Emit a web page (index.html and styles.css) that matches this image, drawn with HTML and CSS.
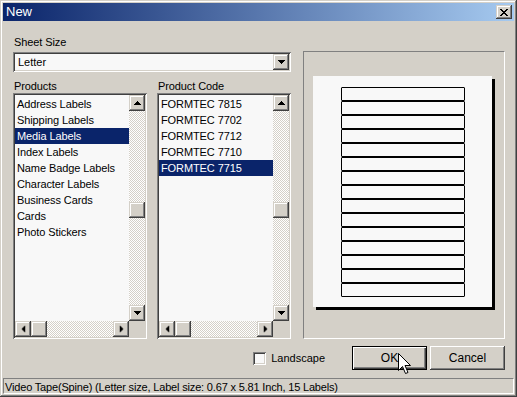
FILE: index.html
```html
<!DOCTYPE html>
<html>
<head>
<meta charset="utf-8">
<link rel="stylesheet" href="styles.css">
</head>
<body>
<div class="window">
  <div class="titlebar">
    <span class="title">New</span>
    <span class="close-btn raised"><svg width="8" height="7" viewBox="0 0 8 7"><path d="M0 0h2v1h1v1h2V1h1V0h2v1H7v1H6v1H5v1h1v1h1v1h1v1H6V6H5V5H3v1H2v1H0V6h1V5h1V4h1V3H2V2H1V1H0z" fill="#000"/></svg></span>
  </div>
  <div class="content">
    <div class="left">
      <div class="label">Sheet Size</div>
      <div class="combo sunken">
        <div class="combo-text">Letter</div>
        <div class="sbtn raised"><svg class="arr down" width="7" height="4" viewBox="0 0 7 4"><path d="M3 0h1v1h1v1h1v1h1v1H0V3h1V2h1V1h1z"/></svg></div>
      </div>
      <div class="lists">
        <div class="col">
          <div class="label label2">Products</div>
          <div class="listbox sunken">
            <div class="items">
              <div class="item">Address Labels</div>
              <div class="item">Shipping Labels</div>
              <div class="item sel">Media Labels</div>
              <div class="item">Index Labels</div>
              <div class="item">Name Badge Labels</div>
              <div class="item">Character Labels</div>
              <div class="item">Business Cards</div>
              <div class="item">Cards</div>
              <div class="item">Photo Stickers</div>
            </div>
            <div class="vscroll track">
              <div class="sbtn raised"><svg class="arr" width="7" height="4" viewBox="0 0 7 4"><path d="M3 0h1v1h1v1h1v1h1v1H0V3h1V2h1V1h1z"/></svg></div>
              <div class="vtrack"><div class="thumb raised vthumb"></div></div>
              <div class="sbtn raised"><svg class="arr down" width="7" height="4" viewBox="0 0 7 4"><path d="M3 0h1v1h1v1h1v1h1v1H0V3h1V2h1V1h1z"/></svg></div>
            </div>
            <div class="hscroll track">
              <div class="sbtn raised"><svg class="arr left" width="7" height="4" viewBox="0 0 7 4"><path d="M3 0h1v1h1v1h1v1h1v1H0V3h1V2h1V1h1z"/></svg></div>
              <div class="thumb raised hthumb"></div>
              <div class="htrack"></div>
              <div class="sbtn raised"><svg class="arr right" width="7" height="4" viewBox="0 0 7 4"><path d="M3 0h1v1h1v1h1v1h1v1H0V3h1V2h1V1h1z"/></svg></div>
            </div>
            <div class="corner"></div>
          </div>
        </div>
        <div class="col">
          <div class="label label2">Product Code</div>
          <div class="listbox sunken">
            <div class="items">
              <div class="item">FORMTEC 7815</div>
              <div class="item">FORMTEC 7702</div>
              <div class="item">FORMTEC 7712</div>
              <div class="item">FORMTEC 7710</div>
              <div class="item sel">FORMTEC 7715</div>
            </div>
            <div class="vscroll track">
              <div class="sbtn raised"><svg class="arr" width="7" height="4" viewBox="0 0 7 4"><path d="M3 0h1v1h1v1h1v1h1v1H0V3h1V2h1V1h1z"/></svg></div>
              <div class="vtrack"><div class="thumb raised vthumb"></div></div>
              <div class="sbtn raised"><svg class="arr down" width="7" height="4" viewBox="0 0 7 4"><path d="M3 0h1v1h1v1h1v1h1v1H0V3h1V2h1V1h1z"/></svg></div>
            </div>
            <div class="hscroll track">
              <div class="sbtn raised"><svg class="arr left" width="7" height="4" viewBox="0 0 7 4"><path d="M3 0h1v1h1v1h1v1h1v1H0V3h1V2h1V1h1z"/></svg></div>
              <div class="thumb raised hthumb"></div>
              <div class="htrack"></div>
              <div class="sbtn raised"><svg class="arr right" width="7" height="4" viewBox="0 0 7 4"><path d="M3 0h1v1h1v1h1v1h1v1H0V3h1V2h1V1h1z"/></svg></div>
            </div>
            <div class="corner"></div>
          </div>
        </div>
      </div>
    </div>
    <div class="preview">
      <div class="paper">
        <div class="lbl"></div><div class="lbl"></div><div class="lbl"></div><div class="lbl"></div><div class="lbl"></div>
        <div class="lbl"></div><div class="lbl"></div><div class="lbl"></div><div class="lbl"></div><div class="lbl"></div>
        <div class="lbl"></div><div class="lbl"></div><div class="lbl"></div><div class="lbl"></div><div class="lbl"></div>
      </div>
    </div>
  </div>
  <div class="actions">
    <label class="check"><span class="box sunken"></span><span>Landscape</span></label>
    <div class="buttons">
      <div class="button default">OK</div>
      <div class="button">Cancel</div>
    </div>
  </div>
  <div class="status">Video Tape(Spine) (Letter size, Label size: 0.67 x 5.81 Inch, 15 Labels)</div>
  <svg class="cursor" width="13" height="21" viewBox="0 0 13 21"><path d="M0.5 0.5V17.5L4.5 13.5L7.5 20.5L10 19.5L7 12.5H12.5Z" fill="#fff" stroke="#000" stroke-width="1"/></svg>
</div>
</body>
</html>
```

FILE: styles.css
```css
html, body {
  margin: 0;
  padding: 0;
  background: #d4d0c8;
}

.window {
  position: relative;
  width: 517px;
  height: 397px;
  box-sizing: border-box;
  padding: 3px;
  background: #d4d0c8;
  box-shadow: inset -1px -1px #404040, inset 1px 1px #d4d0c8, inset -2px -2px #808080, inset 2px 2px #fff;
  display: flex;
  flex-direction: column;
  font-family: "Liberation Sans", Arial, sans-serif;
  font-size: 11px;
  color: #000;
}

.raised {
  background: #d4d0c8;
  box-shadow: inset -1px -1px #404040, inset 1px 1px #d4d0c8, inset -2px -2px #808080, inset 2px 2px #fff;
}

.sunken {
  box-shadow: inset 1px 1px #808080, inset -1px -1px #fff, inset 2px 2px #404040, inset -2px -2px #d4d0c8;
}

.titlebar {
  height: 18px;
  flex: none;
  background: linear-gradient(90deg, #0a246a, #a6caf0);
  display: flex;
  align-items: center;
  justify-content: space-between;
  padding: 0 2px 0 3px;
  color: #fff;
}

.title {
  font-size: 13px;
  line-height: 18px;
}

.close-btn {
  width: 16px;
  height: 14px;
  display: flex;
  align-items: center;
  justify-content: center;
}

.close-btn svg { display: block; margin-left: -1px; }

.content {
  display: grid;
  grid-template-columns: 278px 202px;
  column-gap: 12px;
  padding-left: 10px;
  margin-top: 14px;
}

.label {
  height: 14px;
  line-height: 14px;
  padding-left: 1px;
  letter-spacing: -0.1px;
}

.label2 { margin-top: 7px; }

.combo {
  margin-top: 3px;
  height: 20px;
  box-sizing: border-box;
  padding: 2px;
  background: #f8f8f8;
  display: flex;
}

.combo-text {
  flex: 1;
  padding-left: 3px;
  line-height: 16px;
}

.sbtn {
  width: 16px;
  height: 16px;
  flex: none;
  display: flex;
  align-items: center;
  justify-content: center;
}

.arr { display: block; fill: #000; }
.arr.down { transform: rotate(180deg); }
.arr.left { transform: rotate(-90deg); }
.arr.right { transform: rotate(90deg); }

.lists {
  display: grid;
  grid-template-columns: 134px 134px;
  column-gap: 10px;
}

.listbox {
  height: 246px;
  box-sizing: border-box;
  padding: 2px;
  background: #f8f8f8;
  display: grid;
  grid-template-columns: 1fr 16px;
  grid-template-rows: 1fr 16px;
}

.items {
  padding-top: 1px;
  overflow: hidden;
}

.item {
  height: 16px;
  line-height: 17px;
  padding-left: 2px;
  white-space: nowrap;
  letter-spacing: -0.1px;
}

.item.sel {
  background: #0a246a;
  color: #fff;
}

.track {
  background: repeating-conic-gradient(#fff 0 25%, #d4d0c8 0 50%) 0 0 / 2px 2px;
}

.vscroll {
  display: flex;
  flex-direction: column;
}

.vtrack {
  flex: 1;
  padding-top: 91px;
}

.thumb {
  width: 16px;
  height: 16px;
}

.hscroll {
  display: flex;
}

.htrack { flex: 1; }

.corner { background: #d4d0c8; }

.preview {
  margin-top: 16px;
  height: 288px;
  box-sizing: border-box;
  border: 1px solid;
  border-color: #808080 #fff #fff #808080;
  padding: 24px 0 0 9px;
}

.paper {
  width: 179px;
  height: 231px;
  box-sizing: border-box;
  background: #f8f8f8;
  box-shadow: 3px 3px 0 #000;
  padding: 11px 0 0 28px;
}

.lbl {
  width: 124px;
  height: 14px;
  box-sizing: border-box;
  border: 1px solid #000;
  border-radius: 1px;
}

.actions {
  margin-top: 7px;
  height: 24px;
  display: flex;
  justify-content: flex-end;
  align-items: center;
  padding-right: 9px;
}

.check {
  display: flex;
  align-items: center;
  gap: 5px;
  margin-right: 27px;
}

.box {
  width: 13px;
  height: 13px;
  background: #f8f8f8;
  display: block;
}

.buttons {
  display: flex;
  gap: 3px;
}

.button {
  width: 75px;
  height: 24px;
  box-sizing: border-box;
  line-height: 24px;
  text-align: center;
  font-size: 12px;
  background: #d4d0c8;
  box-shadow: inset -1px -1px #404040, inset 1px 1px #fff, inset -2px -2px #808080, inset 2px 2px #d4d0c8;
}

.button.default {
  box-shadow: inset 0 0 0 1px #000, inset 2px 2px #fff, inset -2px -2px #404040, inset -3px -3px #808080;
}

.status {
  margin-top: 8px;
  height: 18px;
  line-height: 17px;
  box-sizing: border-box;
  border: 1px solid;
  border-color: #808080 #fff #fff #808080;
  padding-left: 1px;
  white-space: nowrap;
  overflow: hidden;
  letter-spacing: -0.17px;
}

.cursor {
  position: absolute;
  left: 398px;
  top: 353px;
}
```
